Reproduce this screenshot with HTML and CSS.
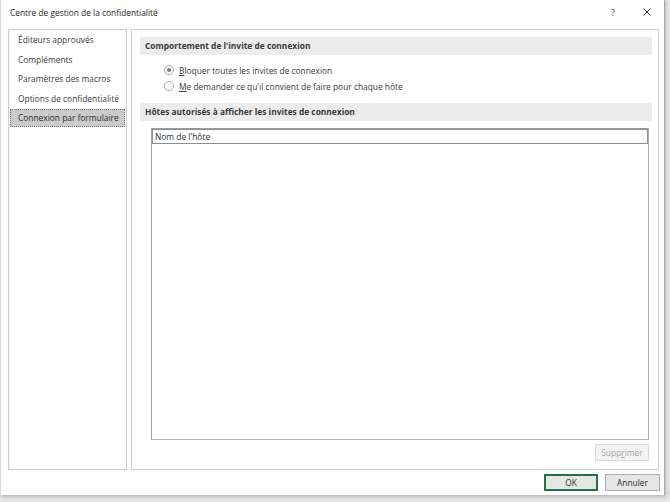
FILE: index.html
```html
<!DOCTYPE html>
<html lang="fr">
<head>
  <meta charset="UTF-8">
  <title>Centre de gestion de la confidentialité</title>
  <link rel="stylesheet" href="styles.css">
</head>

<body>

  <div class="dialog">
    <!-- Title bar -->
    <div class="title-bar">
      <div class="title">Centre de gestion de la confidentialité</div>
      <div class="title-buttons">
        <span class="help">?</span>
        <svg class="close" width="8" height="8" viewBox="0 0 8 8">
          <path d="M0.5 0.5 L7.5 7.5 M7.5 0.5 L0.5 7.5" stroke="#333" stroke-width="1" fill="none"/>
        </svg>
      </div>
    </div>

    <div class="body">
      <!-- Category list -->
      <div class="nav">
        <div class="nav-item">Éditeurs approuvés</div>
        <div class="nav-item">Compléments</div>
        <div class="nav-item">Paramètres des macros</div>
        <div class="nav-item">Options de confidentialité</div>
        <div class="nav-item selected">Connexion par formulaire</div>
      </div>

      <!-- Settings page -->
      <div class="page">
        <div class="section-header">Comportement de l'invite de connexion</div>
        <div class="radios">
          <label class="radio-row">
            <span class="radio checked"></span>
            <span><u>B</u>loquer toutes les invites de connexion</span>
          </label>
          <label class="radio-row">
            <span class="radio"></span>
            <span><u>M</u>e demander ce qu'il convient de faire pour chaque hôte</span>
          </label>
        </div>

        <div class="section-header">Hôtes autorisés à afficher les invites de connexion</div>
        <div class="host-list">
          <div class="host-list-header">Nom de l'hôte</div>
        </div>
        <div class="page-actions">
          <button class="btn disabled">Supp<u>r</u>imer</button>
        </div>
      </div>
    </div>

    <div class="footer">
      <button class="btn default">OK</button>
      <button class="btn">Annuler</button>
    </div>
  </div>

</body>
</html>
```

FILE: styles.css
```css
:root {
  --border-gray: #cfcfcf;
  --header-gray: #ececec;
  --text: #2e2e2e;
  --excel-green: #217346;
}

html, body {
  margin: 0;
  padding: 0;
  width: 670px;
  height: 502px;
  background-color: #e4e4e4;
  font-family: 'Open Sans', 'Noto Sans', sans-serif;
  font-size: 8.4px;
  color: var(--text);
}

.dialog {
  width: 665px;
  height: 495px;
  background-color: #fff;
  display: flex;
  flex-direction: column;
  box-sizing: border-box;
  border-right: 1px solid #a8a8a8;
  border-left: 1px solid #dadada;
  box-shadow: 1px 2px 3px rgba(0, 0, 0, 0.18);
}

/* title bar */
.title-bar {
  height: 27px;
  display: flex;
  align-items: center;
  justify-content: space-between;
  padding: 0 13px 0 9px;
  flex-shrink: 0;
}

.title {
  color: #1e1e1e;
  padding-bottom: 3px;
}

.title-buttons {
  display: flex;
  align-items: center;
  gap: 28px;
  padding-bottom: 3px;
}

.help {
  font-size: 9px;
  color: #444;
}

/* main area */
.body {
  flex: 1;
  display: flex;
  gap: 4px;
  padding: 2px 5px 0 7px;
  min-height: 0;
}

.nav {
  width: 119px;
  height: 441px;
  border: 1px solid var(--border-gray);
  box-sizing: border-box;
  padding: 0 1px;
  box-shadow: inset 1px 1px 0 #f4f4f4;
}

.nav-item {
  height: 19.5px;
  line-height: 19.5px;
  padding-left: 8px;
  color: #3a3a3a;
  white-space: nowrap;
}

.nav-item.selected {
  background-color: #cbcbcb;
  outline: 1px dotted #777;
  outline-offset: -1px;
  color: #2a2a2a;
  margin-top: 0.5px;
  height: 18px;
  line-height: 18px;
}

.page {
  width: 528px;
  height: 441px;
  border: 1px solid var(--border-gray);
  box-sizing: border-box;
  padding: 7px 6px 8px 8px;
  display: flex;
  flex-direction: column;
}

.section-header {
  height: 18px;
  line-height: 18px;
  background-color: var(--header-gray);
  padding-left: 5px;
  font-weight: 700;
  color: #3a3a3a;
  flex-shrink: 0;
}

.radios {
  padding: 7px 0 9px 24px;
}

.radio-row {
  display: flex;
  align-items: center;
  gap: 5px;
  height: 16px;
  color: #3a3a3a;
}

.radio {
  width: 8px;
  height: 8px;
  border: 1px solid #a8a8a8;
  border-radius: 50%;
  background: #fff;
  position: relative;
}

.radio.checked::after {
  content: "";
  position: absolute;
  left: 2px;
  top: 2px;
  width: 4px;
  height: 4px;
  border-radius: 50%;
  background: #7a7a7a;
}

.host-list {
  margin: 7px 3px 0 11px;
  flex: 1;
  border: 1px solid #b4b4b4;
  border-top-color: #9c9c9c;
  border-left-color: #9c9c9c;
}

.host-list-header {
  height: 13px;
  line-height: 13px;
  border: 1px solid #8f8f8f;
  padding-left: 2px;
  color: #2e2e2e;
}

.page-actions {
  display: flex;
  justify-content: flex-end;
  padding: 4px 3px 0 0;
}

/* buttons */
.btn {
  font-family: inherit;
  font-size: 8.4px;
  color: #2e2e2e;
  background-color: #e6e6e6;
  border: 1px solid #adadad;
  width: 55px;
  height: 17px;
  padding: 0;
  cursor: pointer;
}

.btn.default {
  border: 2px solid var(--excel-green);
  width: 54px;
}

.btn.disabled {
  width: 54px;
  color: #a8a8a8;
  background-color: #f2f2f2;
  border-color: #d8d8d8;
  cursor: default;
}

.footer {
  height: 25px;
  display: flex;
  justify-content: flex-end;
  align-items: flex-start;
  gap: 7px;
  padding: 4px 4px 0 0;
  box-sizing: border-box;
  flex-shrink: 0;
}
```
